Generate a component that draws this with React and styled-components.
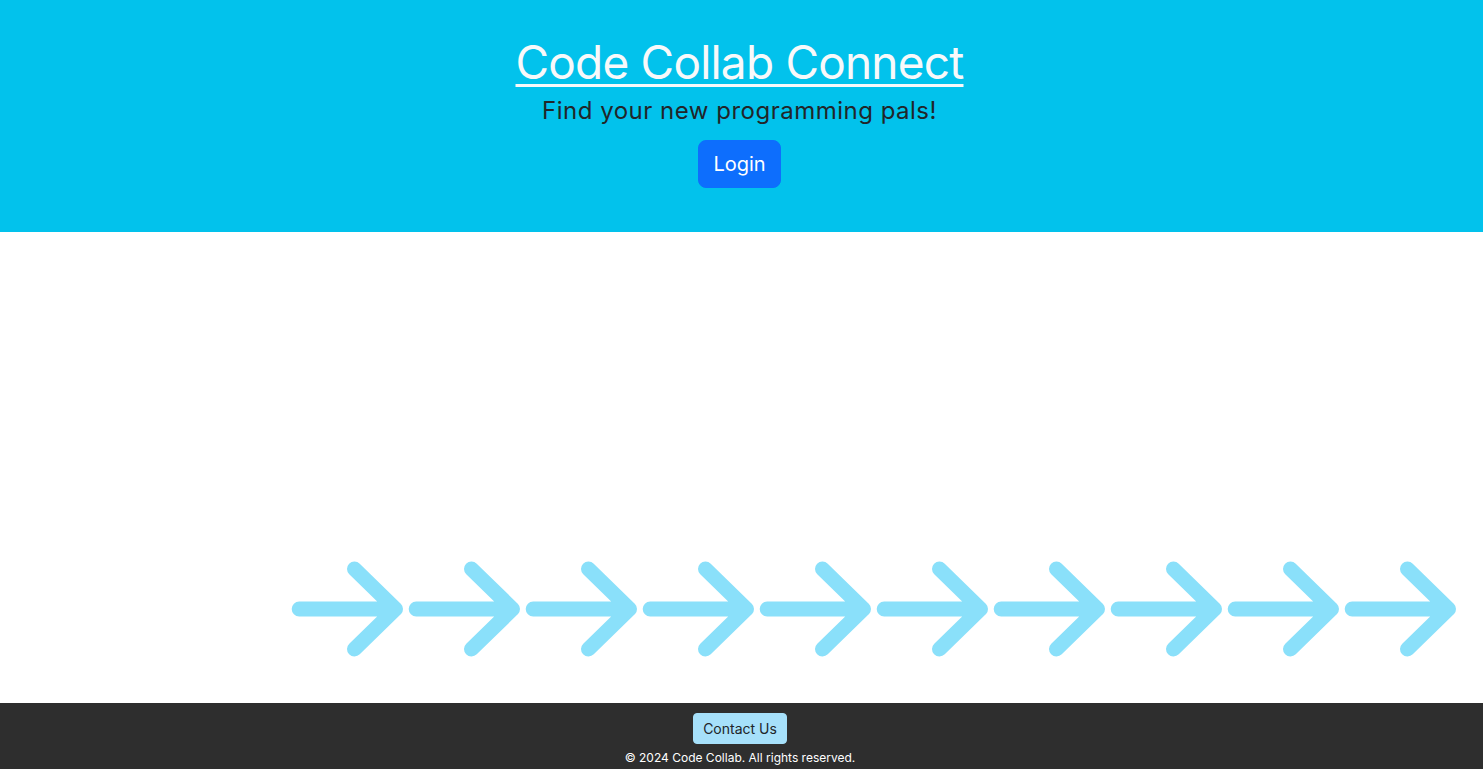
import React from "react";
import styled, { createGlobalStyle } from "styled-components";

const GlobalStyle = createGlobalStyle`
  * { box-sizing: border-box; }
  html, body { margin: 0; padding: 0; }
  body {
    font-family: Inter, "Noto Sans", "Liberation Sans", sans-serif;
    color: #212529;
    background: #ffffff;
  }
`;

const Page = styled.div`
  min-height: 100vh;
  display: flex;
  flex-direction: column;
`;

const Hero = styled.header`
  background: #02c2ec;
  padding: 35px 4px 44px 0;
  display: flex;
  flex-direction: column;
  align-items: center;
  text-align: center;
`;

const Title = styled.h1`
  margin: 0 0 3px;
  font-size: 46px;
  font-weight: 400;
  line-height: 1.2;
  letter-spacing: -0.8px;
`;

const TitleLink = styled.a`
  color: #f8f9fa;
  text-decoration: underline;
  text-decoration-thickness: 3px;
  text-underline-offset: 5px;
`;

const Tagline = styled.p`
  margin: 0 0 11px;
  font-size: 24px;
  line-height: 1.5;
  color: #212529;
  letter-spacing: 0.5px;
`;

const Button = styled.button`
  font-family: inherit;
  border: 1px solid ${(p) => p.$bg};
  background: ${(p) => p.$bg};
  color: ${(p) => p.$fg};
  font-size: ${(p) => (p.$large ? "20px" : "14px")};
  line-height: 1.5;
  padding: ${(p) => (p.$large ? "8px 14px" : "4px 9px")};
  border-radius: ${(p) => (p.$large ? "8px" : "4px")};
  cursor: pointer;
`;

const Main = styled.main`
  flex: 1;
  display: flex;
  flex-direction: column;
  justify-content: flex-end;
`;

const ArrowRow = styled.div`
  display: flex;
  padding-left: 280px;
  margin-bottom: 39px;
`;

const ArrowSvg = styled.svg`
  display: block;
  flex: 0 0 auto;
  width: 117px;
  height: 110px;
  overflow: visible;
`;

const Footer = styled.footer`
  background: #2e2e2e;
  padding: 10px 3px 2px 0;
  display: flex;
  flex-direction: column;
  align-items: center;
`;

const Copyright = styled.p`
  margin: 5px 0 0;
  font-size: 12px;
  line-height: 18px;
  color: #ffffff;
`;

const Arrow = () => (
  <ArrowSvg viewBox="0 0 117 110" fill="none">
    <path
      d="M19.2 55H115.5M74.5 15l41 40-41 40"
      stroke="#8ae0fa"
      strokeWidth="15"
      strokeLinecap="round"
      strokeLinejoin="round"
    />
  </ArrowSvg>
);

export default function App() {
  return (
    <Page>
      <GlobalStyle />
      <Hero>
        <Title>
          <TitleLink href="#">Code Collab Connect</TitleLink>
        </Title>
        <Tagline>Find your new programming pals!</Tagline>
        <Button $large $bg="#0d6efd" $fg="#ffffff">Login</Button>
      </Hero>
      <Main>
        <ArrowRow>
          {Array.from({ length: 10 }).map((_, i) => (
            <Arrow key={i} />
          ))}
        </ArrowRow>
      </Main>
      <Footer>
        <Button $bg="#a6e0fa" $fg="#212529">Contact Us</Button>
        <Copyright>© 2024 Code Collab. All rights reserved.</Copyright>
      </Footer>
    </Page>
  );
}
